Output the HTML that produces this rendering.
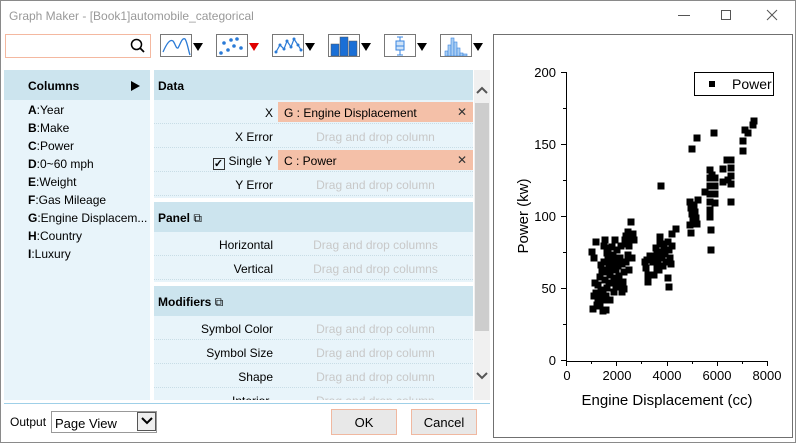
<!DOCTYPE html>
<html><head><meta charset="utf-8"><style>
*{box-sizing:border-box;margin:0;padding:0}
body{width:796px;height:443px;overflow:hidden;background:#fff;font-family:"Liberation Sans",sans-serif;font-size:12px;color:#000;position:relative}
.a{position:absolute}
.win{left:0;top:0;width:796px;height:443px;border:1px solid #8a8a8a}
.btn{border:1px solid #777;width:32px;height:23px;top:34px;background:#fff}
.tri{top:43px;width:0;height:0;border-left:5px solid transparent;border-right:5px solid transparent;border-top:8px solid #000}
.row{left:154px;width:319px;height:22px;border-bottom:1px dotted #c8dde6}
.row .k{position:absolute;right:200px;top:4px;text-align:right;white-space:nowrap}
.row .v{position:absolute;left:124px;right:0;top:0;height:20px;padding:4px 0 0 0;color:#c8c8c8;text-align:center}
.row .v.s{background:#f4c0a8;color:#000;text-align:left;padding-left:6px}
.row .v.s:after{content:"✕";position:absolute;right:6px;top:3px;font-size:12px;color:#333}
.hd{left:154px;width:319px;height:30px;background:#cce4ee;font-weight:bold;padding:9px 0 0 4px}
.col{left:28px;height:18px}
.col b{font-weight:bold}
</style></head><body>
<div class="a win"></div>
<div class="a" style="left:9px;top:9px;color:#999;font-size:12px">Graph Maker - [Book1]automobile_categorical</div>
<div class="a" style="left:678px;top:15px;width:12px;height:1px;background:#555"></div>
<div class="a" style="left:721px;top:10px;width:10px;height:10px;border:1px solid #555"></div>
<svg class="a" style="left:766px;top:9px" width="12" height="12"><path d="M1 1L11 11M11 1L1 11" stroke="#555" stroke-width="1"/></svg>

<div class="a" style="left:5px;top:34px;width:146px;height:24px;border:1px solid #f4b8a0"></div>
<svg class="a" style="left:130px;top:38px" width="16" height="16"><circle cx="6.5" cy="6.5" r="5" fill="none" stroke="#000" stroke-width="1.5"/><path d="M10 10L14 14" stroke="#000" stroke-width="1.8"/></svg>

<div class="a btn" style="left:160px"><svg width="30" height="21"><path d="M2 17C6 8 9 4 12 6C14 8 15 14 17 13C19 10 21 2 24 4C26 6 28 18 29 20" fill="none" stroke="#2a7ad6" stroke-width="1.3"/></svg></div>
<div class="a tri" style="left:193px"></div>
<div class="a btn" style="left:216px"><svg width="30" height="21" fill="#2a7ad6"><circle cx="4" cy="18" r="1.8"/><circle cx="7" cy="8" r="1.8"/><circle cx="11" cy="15" r="1.8"/><circle cx="14" cy="5" r="1.8"/><circle cx="17" cy="11" r="1.8"/><circle cx="20" cy="4" r="1.8"/><circle cx="24" cy="13" r="1.8"/></svg></div>
<div class="a tri" style="left:249px;border-top-color:#e00000"></div>
<div class="a btn" style="left:272px"><svg width="30" height="21"><path d="M3 17L7 10L11 14L14 6L18 12L21 4L25 10L28 15" fill="none" stroke="#2a7ad6" stroke-width="1.2"/><g fill="#2a7ad6"><circle cx="3" cy="17" r="1.5"/><circle cx="7" cy="10" r="1.5"/><circle cx="11" cy="14" r="1.5"/><circle cx="14" cy="6" r="1.5"/><circle cx="18" cy="12" r="1.5"/><circle cx="21" cy="4" r="1.5"/><circle cx="25" cy="10" r="1.5"/><circle cx="28" cy="15" r="1.5"/></g></svg></div>
<div class="a tri" style="left:305px"></div>
<div class="a btn" style="left:328px"><svg width="30" height="21"><rect x="2" y="9" width="8" height="12" fill="#1a6fd6" stroke="#555" stroke-width=".5"/><rect x="11" y="2" width="8" height="19" fill="#1a6fd6" stroke="#555" stroke-width=".5"/><rect x="20" y="6" width="8" height="15" fill="#1a6fd6" stroke="#555" stroke-width=".5"/></svg></div>
<div class="a tri" style="left:361px"></div>
<div class="a btn" style="left:384px"><svg width="30" height="21" stroke="#3a86e0" fill="none"><path d="M15 2V20M12 2H18M12 20H18"/><rect x="11" y="6" width="8" height="9" fill="#cfe3f8"/><path d="M11 11H19"/></svg></div>
<div class="a tri" style="left:417px"></div>
<div class="a btn" style="left:440px"><svg width="30" height="21" fill="#a9cdf3" stroke="#3a86e0" stroke-width=".6"><rect x="4" y="16" width="3" height="5"/><rect x="7" y="10" width="3" height="11"/><rect x="10" y="3" width="3" height="18"/><rect x="13" y="7" width="3" height="14"/><rect x="16" y="13" width="3" height="8"/><rect x="19" y="18" width="3" height="3"/><rect x="22" y="19" width="4" height="2"/></svg></div>
<div class="a tri" style="left:473px"></div>

<div class="a" style="left:4px;top:70px;width:146px;height:330px;background:#e8f4fa"></div>
<div class="a" style="left:4px;top:70px;width:146px;height:30px;background:#cce4ee"></div>
<div class="a" style="left:28px;top:79px;font-weight:bold">Columns</div>
<div class="a" style="left:131px;top:81px;width:0;height:0;border-top:5px solid transparent;border-bottom:5px solid transparent;border-left:9px solid #000"></div>
<div class="a col" style="top:103px"><b>A</b>:Year</div>
<div class="a col" style="top:121px"><b>B</b>:Make</div>
<div class="a col" style="top:139px"><b>C</b>:Power</div>
<div class="a col" style="top:157px"><b>D</b>:0~60 mph</div>
<div class="a col" style="top:175px"><b>E</b>:Weight</div>
<div class="a col" style="top:193px"><b>F</b>:Gas Mileage</div>
<div class="a col" style="top:211px;white-space:nowrap"><b>G</b>:Engine Displacem...</div>
<div class="a col" style="top:229px"><b>H</b>:Country</div>
<div class="a col" style="top:247px"><b>I</b>:Luxury</div>

<div class="a" style="left:154px;top:70px;width:319px;height:330px;background:#e8f4fa;overflow:hidden"></div>
<div class="a hd" style="top:70px">Data</div>
<div class="a row" style="top:102px"><span class="k">X</span><span class="v s">G : Engine Displacement</span></div>
<div class="a row" style="top:126px"><span class="k">X Error</span><span class="v">Drag and drop column</span></div>
<div class="a row" style="top:150px"><span class="k"><span style="display:inline-block;width:12px;height:12px;border:1px solid #333;vertical-align:-2px;margin-right:4px;font-size:11px;line-height:10px;text-align:center;font-weight:bold">✓</span>Single Y</span><span class="v s">C : Power</span></div>
<div class="a row" style="top:174px"><span class="k">Y Error</span><span class="v">Drag and drop column</span></div>
<div class="a" style="left:154px;top:198px;width:319px;height:4px;background:#fff"></div>
<div class="a hd" style="top:202px">Panel <span style="font-weight:normal">⧉</span></div>
<div class="a row" style="top:234px"><span class="k">Horizontal</span><span class="v">Drag and drop columns</span></div>
<div class="a row" style="top:258px"><span class="k">Vertical</span><span class="v">Drag and drop columns</span></div>
<div class="a" style="left:154px;top:282px;width:319px;height:4px;background:#fff"></div>
<div class="a hd" style="top:286px">Modifiers <span style="font-weight:normal">⧉</span></div>
<div class="a row" style="top:318px"><span class="k">Symbol Color</span><span class="v">Drag and drop column</span></div>
<div class="a row" style="top:342px"><span class="k">Symbol Size</span><span class="v">Drag and drop column</span></div>
<div class="a row" style="top:366px"><span class="k">Shape</span><span class="v">Drag and drop column</span></div>
<div class="a" style="left:154px;top:390px;width:319px;height:10px;overflow:hidden"><div class="a" style="left:78px;top:4px;color:#000">Interior</div><div class="a" style="left:162px;top:4px;color:#c8c8c8">Drag and drop column</div></div>

<div class="a" style="left:474px;top:70px;width:16px;height:330px;background:#f0f0f0"></div>
<div class="a" style="left:475px;top:103px;width:14px;height:228px;background:#cdcdcd"></div>
<svg class="a" style="left:474px;top:84px" width="16" height="12"><path d="M3 9L8 4L13 9" fill="none" stroke="#555" stroke-width="2"/></svg>
<svg class="a" style="left:474px;top:370px" width="16" height="12"><path d="M3 3L8 8L13 3" fill="none" stroke="#555" stroke-width="2"/></svg>

<div class="a" style="left:4px;top:403px;width:486px;height:1px;background:#9fd0e8"></div>
<div class="a" style="left:10px;top:415px">Output</div>
<div class="a" style="left:51px;top:411px;width:106px;height:22px;border:1px solid #999;background:#fff;padding:4px 0 0 3px;font-size:13px">Page View</div>
<div class="a" style="left:137px;top:412px;width:19px;height:19px;border:1px solid #555;background:#eee"></div>
<svg class="a" style="left:139px;top:414px" width="16" height="14"><path d="M3 4L8 9L13 4" fill="none" stroke="#000" stroke-width="2"/></svg>
<div class="a" style="left:331px;top:409px;width:66px;height:26px;border:1px solid #f0b8a0;background:#e8e8e8;text-align:center;padding-top:5px;font-size:13px">OK</div>
<div class="a" style="left:411px;top:409px;width:66px;height:26px;border:1px solid #f0b8a0;background:#e8e8e8;text-align:center;padding-top:5px;font-size:13px">Cancel</div>

<div class="a" style="left:493px;top:34px;width:300px;height:404px;border:1px solid #707070"></div>
<svg class="a" style="left:0;top:0" width="796" height="443" font-family="Liberation Sans,sans-serif">
<g stroke="#000" stroke-width="1" fill="none">
<path d="M566.5 72V361.5H768"/>
<path d="M561 72.5H566M561 144.5H566M561 216.5H566M561 288.5H566M561 360.5H566M563 108.5H566M563 180.5H566M563 252.5H566M563 324.5H566"/>
<path d="M566.5 361V366M616.5 361V366M667.5 361V366M717.5 361V366M767.5 361V366M591.5 361V364M641.5 361V364M692.5 361V364M742.5 361V364"/>
<rect x="694.5" y="72.5" width="79" height="23"/>
</g>
<g font-size="13" text-anchor="end" fill="#000">
<text x="556" y="77">200</text><text x="556" y="149">150</text><text x="556" y="221">100</text><text x="556" y="293">50</text><text x="556" y="365">0</text>
</g>
<g font-size="13" text-anchor="middle" fill="#000">
<text x="567" y="380">0</text><text x="617" y="380">2000</text><text x="667" y="380">4000</text><text x="717" y="380">6000</text><text x="767" y="380">8000</text>
<text x="667" y="405" font-size="15">Engine Displacement (cc)</text>
</g>
<text x="528" y="216" font-size="15" text-anchor="middle" transform="rotate(-90 528 216)">Power (kw)</text>
<rect x="709" y="81" width="6" height="6"/>
<text x="732" y="89" font-size="14">Power</text>
</svg>
<svg class="a" style="left:0;top:0" width="796" height="443"><g fill="#000" transform="translate(-0.5,-0.5)">
<path d="M589 249h7v7h-7zM591 255h7v7h-7zM593 239h7v7h-7zM592 280h7v7h-7zM590 306h7v7h-7zM595 282h7v7h-7zM597 274h7v7h-7zM598 287h7v7h-7zM599 267h7v7h-7zM600 292h7v7h-7zM601 259h7v7h-7zM602 277h7v7h-7zM603 269h7v7h-7zM604 285h7v7h-7zM605 257h7v7h-7zM606 262h7v7h-7zM607 272h7v7h-7zM608 280h7v7h-7zM609 266h7v7h-7zM610 253h7v7h-7zM611 275h7v7h-7zM612 259h7v7h-7zM613 267h7v7h-7zM614 247h7v7h-7zM615 263h7v7h-7zM616 273h7v7h-7zM617 255h7v7h-7zM618 243h7v7h-7zM619 261h7v7h-7zM620 279h7v7h-7zM621 269h7v7h-7zM622 237h7v7h-7zM623 233h7v7h-7zM624 241h7v7h-7zM625 229h7v7h-7zM626 243h7v7h-7zM627 235h7v7h-7zM601 297h7v7h-7zM603 293h7v7h-7zM595 299h7v7h-7zM597 303h7v7h-7zM599 289h7v7h-7zM591 293h7v7h-7zM593 290h7v7h-7zM605 245h7v7h-7zM609 244h7v7h-7zM617 280h7v7h-7zM619 289h7v7h-7zM621 286h7v7h-7zM613 284h7v7h-7zM602 237h7v7h-7zM601 243h7v7h-7zM608 252h7v7h-7zM625 252h7v7h-7zM629 255h7v7h-7zM631 237h7v7h-7zM628 219h7v7h-7zM594 302h7v7h-7zM596 295h7v7h-7zM603 307h7v7h-7zM607 297h7v7h-7zM611 289h7v7h-7zM600 308h7v7h-7zM606 280h7v7h-7zM615 282h7v7h-7zM623 259h7v7h-7zM626 267h7v7h-7zM630 231h7v7h-7zM612 237h7v7h-7zM604 250h7v7h-7zM598 262h7v7h-7z"/>
<path d="M642 259h7v7h-7zM643 265h7v7h-7zM644 257h7v7h-7zM645 272h7v7h-7zM647 253h7v7h-7zM645 279h7v7h-7zM651 272h7v7h-7zM653 245h7v7h-7zM654 252h7v7h-7zM655 259h7v7h-7zM656 267h7v7h-7zM657 241h7v7h-7zM658 249h7v7h-7zM659 255h7v7h-7zM660 263h7v7h-7zM661 245h7v7h-7zM662 251h7v7h-7zM663 259h7v7h-7zM665 239h7v7h-7zM666 247h7v7h-7zM667 255h7v7h-7zM668 261h7v7h-7zM669 243h7v7h-7zM665 275h7v7h-7zM666 284h7v7h-7zM673 226h7v7h-7zM669 231h7v7h-7zM657 234h7v7h-7zM659 241h7v7h-7zM654 265h7v7h-7zM650 259h7v7h-7zM658 183h7v7h-7z"/>
<path d="M687 199h7v7h-7zM688 205h7v7h-7zM689 211h7v7h-7zM690 217h7v7h-7zM691 202h7v7h-7zM692 209h7v7h-7zM693 215h7v7h-7zM694 221h7v7h-7zM695 197h7v7h-7zM687 222h7v7h-7zM688 230h7v7h-7zM689 146h7v7h-7zM694 135h7v7h-7zM702 189h7v7h-7zM707 167h7v7h-7zM707 175h7v7h-7zM707 183h7v7h-7zM707 191h7v7h-7zM707 199h7v7h-7zM707 207h7v7h-7zM707 214h7v7h-7zM708 227h7v7h-7zM708 247h7v7h-7zM712 175h7v7h-7zM712 183h7v7h-7zM712 191h7v7h-7zM712 200h7v7h-7zM709 172h7v7h-7zM711 130h7v7h-7z"/>
<path d="M720 166h7v7h-7zM720 179h7v7h-7zM724 157h7v7h-7zM728 157h7v7h-7zM728 165h7v7h-7zM728 173h7v7h-7zM728 181h7v7h-7zM728 199h7v7h-7zM725 177h7v7h-7zM740 138h7v7h-7zM740 148h7v7h-7zM745 130h7v7h-7zM750 122h7v7h-7zM751 118h7v7h-7zM742 127h7v7h-7z"/>
</g></svg>
</body></html>
